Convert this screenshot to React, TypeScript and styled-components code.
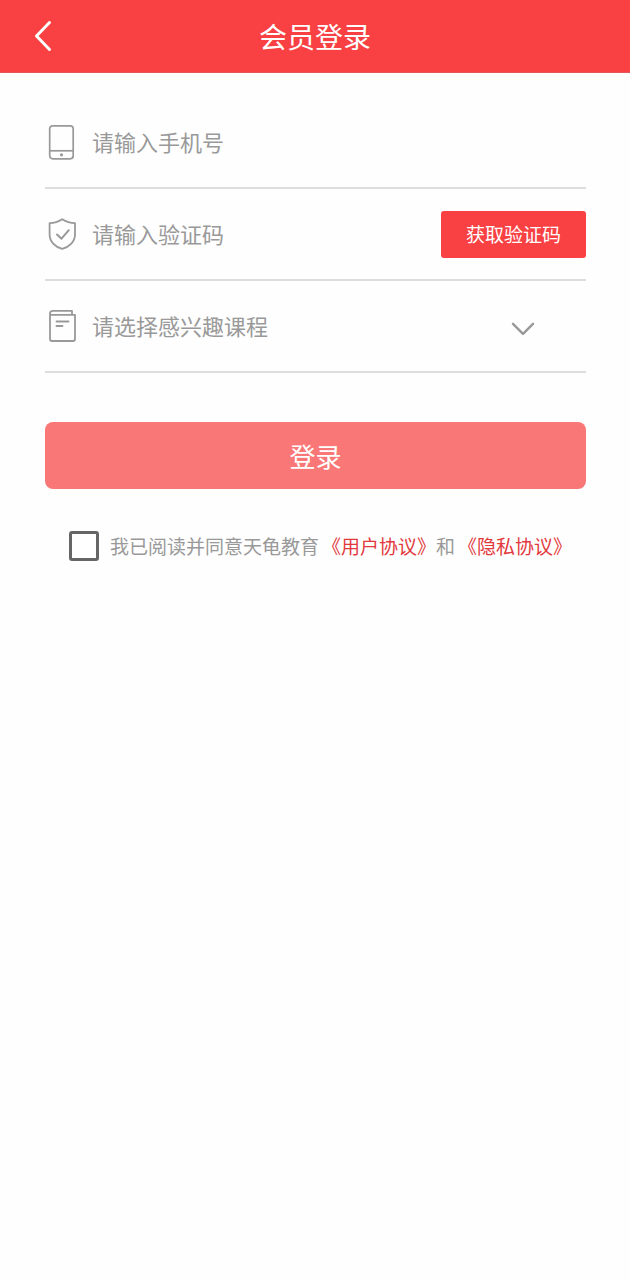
import React, { useState } from "react";
import styled, { createGlobalStyle } from "styled-components";

const GlobalStyle = createGlobalStyle`
  *, *::before, *::after { box-sizing: border-box; }
  body {
    margin: 0;
    background: #fefefe;
    color: #999;
    font-family: "Noto Sans CJK SC", "Noto Sans", sans-serif;
    font-weight: 400;
  }
  button, input, select { font-family: inherit; }
`;

const Header = styled.header`
  display: grid;
  grid-template-columns: 86px 1fr 86px;
  align-items: center;
  height: 73px;
  background: #f94144;
  border-bottom: 1px solid #e2575a;
`;

const BackButton = styled.button`
  display: flex;
  align-items: center;
  justify-content: center;
  height: 72px;
  padding: 0;
  border: 0;
  background: none;
  color: #fff;
  cursor: pointer;
`;

const Title = styled.h1`
  margin: 0;
  font-size: 28px;
  font-weight: 400;
  line-height: 72px;
  text-align: center;
  color: #fff;
`;

const Form = styled.form`
  padding: 24px 44px 0 45px;
`;

const Field = styled.div`
  display: flex;
  align-items: center;
  gap: 14px;
  height: 92px;
  border-bottom: 2px solid #ddd;
`;

const FieldIcon = styled.label`
  display: flex;
  flex: none;
  width: 33px;
  color: #999;
`;

const TextInput = styled.input`
  flex: 1;
  min-width: 0;
  height: 48px;
  padding: 0 0 2px;
  border: 0;
  outline: 0;
  background: none;
  color: #333;
  font-size: 22px;

  &::placeholder {
    color: #999;
    opacity: 1;
  }
`;

const SelectBox = styled.div`
  display: grid;
  flex: 1;
  align-items: center;

  > * {
    grid-area: 1 / 1;
  }

  > svg {
    justify-self: end;
    margin-right: 51px;
    margin-top: 6px;
    pointer-events: none;
  }
`;

const Select = styled.select`
  width: 100%;
  height: 48px;
  padding: 0 0 2px;
  border: 0;
  outline: 0;
  background: none;
  appearance: none;
  color: #999;
  font-size: 22px;
`;

const CodeButton = styled.button`
  flex: none;
  width: 145px;
  height: 47px;
  padding: 0 0 2px;
  border: 0;
  border-radius: 3px;
  background: #f94144;
  color: #fff;
  font-size: 19px;
  cursor: pointer;
`;

const LoginButton = styled.button`
  display: block;
  width: 100%;
  height: 67px;
  margin-top: 49px;
  padding: 0;
  border: 0;
  border-radius: 8px;
  background: #f97777;
  color: #fff;
  font-size: 26px;
  cursor: pointer;
`;

const Agreement = styled.div`
  display: flex;
  align-items: center;
  gap: 11px;
  margin: 41px 0 0 24px;
  font-size: 19px;
  line-height: 32px;
`;

const Checkbox = styled.input`
  flex: none;
  width: 30px;
  height: 30px;
  margin: 0;
  border: 3px solid #666;
  border-radius: 3px;
  appearance: none;
  background: #fff;

  &:checked {
    background: #f94144;
  }
`;

const AgreementLink = styled.a`
  margin-left: 3px;
  color: #e2393d;
  text-decoration: none;
`;

const BackIcon = () => (
  <svg width="18" height="32" viewBox="0 0 18 32" fill="none" stroke="currentColor" strokeWidth="3" strokeLinecap="round" strokeLinejoin="round" aria-hidden="true">
    <path d="M15.5 2.5 2.5 16l13 13.5" />
  </svg>
);

const PhoneIcon = () => (
  <svg width="33" height="36" viewBox="0 0 33 36" fill="none" stroke="currentColor" strokeWidth="1.7" aria-hidden="true">
    <rect x="4.7" y="1.8" width="23.5" height="33" rx="3" />
    <path d="M5 26.8h23" />
    <circle cx="16.5" cy="30.8" r="1.6" fill="currentColor" stroke="none" />
  </svg>
);

const ShieldIcon = () => (
  <svg width="33" height="34" viewBox="0 0 33 34" fill="none" stroke="currentColor" strokeWidth="1.8" strokeLinecap="round" strokeLinejoin="round" aria-hidden="true">
    <path d="M17.2 2.2C13.5 4.6 9.3 6 4.6 6.2V17.5C4.6 24.5 10 30 17.2 31.8 24.5 30 30 24.5 30 17.5V6.2C25 6 21 4.6 17.2 2.2Z" />
    <path d="m12 17.5 4.5 4.2 7.3-8.5" strokeWidth="2" />
  </svg>
);

const BookIcon = () => (
  <svg width="33" height="34" viewBox="0 0 33 34" fill="none" stroke="currentColor" strokeWidth="1.8" strokeLinecap="round" strokeLinejoin="round" aria-hidden="true">
    <path d="M27 5.8V1.8H7.5a2.5 2.5 0 0 0-2.5 2.5V30a2 2 0 0 0 2 2H28a2 2 0 0 0 2-2V5.8H6.2" />
    <path d="M11.5 12.5h12M11.5 17h6" />
  </svg>
);

const ChevronIcon = () => (
  <svg width="24" height="14" viewBox="0 0 24 14" fill="none" stroke="#999" strokeWidth="2.4" strokeLinecap="round" strokeLinejoin="round" aria-hidden="true">
    <path d="M2 1.8 12 11.8 22 1.8" />
  </svg>
);

export default function App() {
  const [agreed, setAgreed] = useState(false);

  return (
    <>
      <GlobalStyle />
      <Header>
        <BackButton type="button" aria-label="返回">
          <BackIcon />
        </BackButton>
        <Title>会员登录</Title>
      </Header>
      <Form onSubmit={(event) => event.preventDefault()}>
        <Field>
          <FieldIcon htmlFor="phone" aria-label="手机号">
            <PhoneIcon />
          </FieldIcon>
          <TextInput id="phone" type="tel" placeholder="请输入手机号" />
        </Field>
        <Field>
          <FieldIcon htmlFor="code" aria-label="验证码">
            <ShieldIcon />
          </FieldIcon>
          <TextInput id="code" type="text" inputMode="numeric" placeholder="请输入验证码" />
          <CodeButton type="button">获取验证码</CodeButton>
        </Field>
        <Field>
          <FieldIcon htmlFor="course" aria-label="课程">
            <BookIcon />
          </FieldIcon>
          <SelectBox>
            <Select id="course" defaultValue="">
              <option value="">请选择感兴趣课程</option>
            </Select>
            <ChevronIcon />
          </SelectBox>
        </Field>
        <LoginButton type="submit">登录</LoginButton>
        <Agreement>
          <Checkbox
            id="agree"
            type="checkbox"
            checked={agreed}
            onChange={(event) => setAgreed(event.target.checked)}
          />
          <span>
            <label htmlFor="agree">我已阅读并同意天龟教育</label>
            <AgreementLink href="#terms">《用户协议》</AgreementLink>和
            <AgreementLink href="#privacy">《隐私协议》</AgreementLink>
          </span>
        </Agreement>
      </Form>
    </>
  );
}
